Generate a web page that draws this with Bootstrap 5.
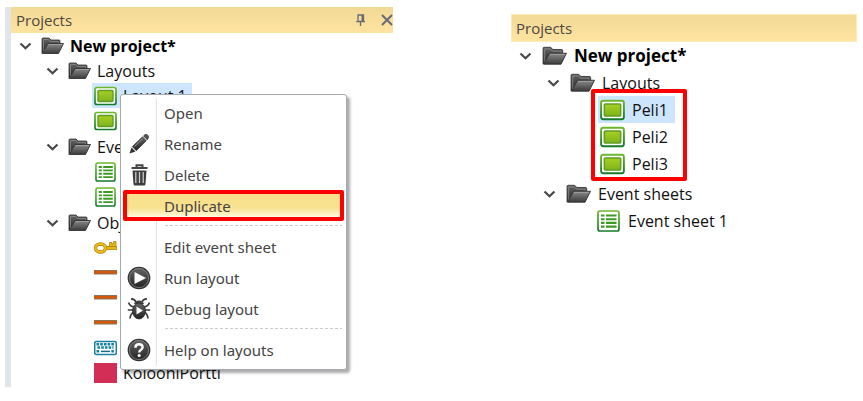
<!DOCTYPE html>
<html lang="en">
<head>
<meta charset="utf-8">
<meta name="viewport" content="width=device-width, initial-scale=1">
<title>Projects</title>
<link href="https://cdn.jsdelivr.net/npm/bootstrap@5.3.0/dist/css/bootstrap.min.css" rel="stylesheet">
<style>
body{font-family:"Open Sans","Noto Sans",sans-serif;font-size:16px;line-height:20px;color:#111;background:#fff}
.workspace{display:grid;grid-template-columns:388fr 346fr;column-gap:118px;padding:7px 6px 14px 5px;align-items:start}
.pane-left{border-left:6px solid #e0e5e9;padding-bottom:2px}
.pane-right{margin-top:7px}
.pane-title{height:26px;padding:0 0 0 5px;background:linear-gradient(#f1d996,#ffe4a0);color:#4b4742;font-size:15px}
.pane-right .pane-title{height:28px;padding-left:4px;border:1px solid #fcebbb}
.pane-title h1,.pane-title h2{font-size:inherit;font-weight:400;margin:0;line-height:20px}
.tool,.twisty{border:0;background:none;padding:0;display:flex;flex:none}
.tree{padding-left:8px}
.tree ul{padding-left:27px}
.line{height:25px;white-space:nowrap}
.twisty{width:13px;margin-right:9px}
.glyph{width:23px;height:20px;flex:none;margin-right:6px}
.tree .leaf{padding-left:48px}
.picked{background:#cde6fe;padding-left:2px;margin-left:-2px;width:100px}
.group-next{margin-top:1px}
.pane-right .tree ul{padding-left:28px}
.pane-right .line{height:27px}
.pane-right .twisty{margin-right:10px}
.pane-right .glyph{width:25px;height:22px;margin-right:7px}
.pane-right .tree .leaf{padding-left:53px}
.pane-right .picked{width:77px}
.pane-right .group-next{margin-top:3px;margin-left:-4px}
.pane-right .root-line{font-size:17px}
.picks{position:relative}
.picks::after{content:"";position:absolute;left:44px;top:-7px;width:96px;height:92px;border:4px solid #f00;border-radius:2px;pointer-events:none}
.ctx{position:absolute;left:109px;top:87px;width:227px;padding:2px 2px 4px;background:#fff;border:1px solid #a5aab0;border-radius:3px;box-shadow:3px 3px 3px #0005;font-family:"Noto Sans","Open Sans",sans-serif;font-size:15px}
.ctx::before{content:"";position:absolute;left:35px;top:3px;bottom:3px;border-left:1px solid #e0e3e6}
.ctx button{height:31px;padding:0 0 0 4px;color:#444;gap:13px;position:relative}
.ctx button svg,.ctx .blank{width:24px;height:24px;flex:none}
.ctx button.chosen{background:linear-gradient(#f9df8a,#f8e18f 60%,#fffadd);border:4px solid #f00;border-radius:2px;padding-left:0}
.ctx hr{margin:4px 2px 5px 42px;height:1px;border:0;opacity:1;background:repeating-linear-gradient(90deg,#ccc 0 3px,#fff 3px 5px)}
</style>
<script src="https://cdn.jsdelivr.net/npm/bootstrap@5.3.0/dist/js/bootstrap.bundle.min.js"></script>
</head>
<body>
<svg width="0" height="0" class="position-absolute" aria-hidden="true">
<defs>
<linearGradient id="gGreen" x2="0" y2="1"><stop stop-color="#6db82a"/><stop offset="1" stop-color="#137a2b"/></linearGradient>
<linearGradient id="gLime" x2="0" y2="1"><stop stop-color="#a9cf22"/><stop offset="1" stop-color="#7fb31c"/></linearGradient>
<linearGradient id="gGray" x2="0" y2="1"><stop stop-color="#8b8b8b"/><stop offset="1" stop-color="#3a3a3a"/></linearGradient>
<linearGradient id="gDark" x2="0" y2="1"><stop stop-color="#666"/><stop offset="1" stop-color="#222"/></linearGradient>
<symbol id="chev" viewBox="0 0 13 8"><path d="M1.5 1.5 6.5 6.300 11.500 1.500" fill="none" stroke="#484848" stroke-width="2.200"/></symbol>
<symbol id="folder" viewBox="0 0 23 20"><path d="M1 17.500V3Q1 2 2 2H8L10 4H18Q19 4 19 5V8H7Z" fill="url(#gDark)" stroke="#333" stroke-width=".8"/><path d="M2.500 16V3.500H7.500L9.500 5.500H17.500V7" fill="none" stroke="#8a8a8a" stroke-width=".8"/><path d="M1.500 17.500 7 7.500H22.500L17.500 17.500Z" fill="url(#gGray)" stroke="#333" stroke-width=".9"/><path d="M7.500 8.500H21" stroke="#aaa" stroke-width=".7"/></symbol>
<symbol id="layout" viewBox="0 0 23 20"><rect x="1" y="1.500" width="21" height="17" rx="2" fill="#fff" stroke="url(#gGreen)" stroke-width="1.700"/><rect x="4" y="4.500" width="15" height="11" rx="1" fill="url(#gLime)" stroke="#5c9f20" stroke-width="1.400"/></symbol>
<symbol id="sheet" viewBox="0 0 23 22"><rect x="1" y="1" width="21" height="20" rx="2" fill="#fff" stroke="url(#gGreen)" stroke-width="1.700"/><path d="M4 5.500H7.500M9 5.500H19.500M4 9.200H7.500M9 9.200H19.500M4 12.900H7.500M9 12.900H19.500M4 16.600H7.500M9 16.600H19.500" stroke="#3b9a22" stroke-width="2.100"/></symbol>
<symbol id="bar" viewBox="0 0 23 20"><path d="M0 7.500H23V11H0Z" fill="#d4580b"/><path d="M0 7.500H23M0 11H23" stroke="#8c735c" stroke-width="1"/></symbol>
</defs>
</svg>
<main class="workspace">
<section class="pane-left position-relative">
<header class="pane-title d-flex align-items-center"><h1 class="flex-grow-1">Projects</h1>
<button class="tool me-3" aria-label="Pin"><svg width="9" height="13" viewBox="0 0 9 13"><path d="M2 1H7.500V7.500H2ZM.2 7.700H9M4.500 8V12M6.200 1V7" fill="none" stroke="#676b76" stroke-width="1.300"/></svg></button>
<button class="tool" aria-label="Close"><svg width="12" height="12" viewBox="0 0 12 12"><path d="M1 1 11 11M11 1 1 11" stroke="#676b76" stroke-width="2"/></svg></button></header>
<ul class="tree list-unstyled m-0">
<li><div class="line root-line d-flex align-items-center fw-bold text-black"><button class="twisty" aria-label="Collapse project"><svg width="13" height="8"><use href="#chev"/></svg></button><svg class="glyph"><use href="#folder"/></svg>New project*</div>
<ul class="list-unstyled">
<li><div class="line d-flex align-items-center"><button class="twisty" aria-label="Collapse layouts"><svg width="13" height="8"><use href="#chev"/></svg></button><svg class="glyph"><use href="#folder"/></svg>Layouts</div>
<ul class="leaf list-unstyled">
<li class="line d-flex align-items-center"><div class="line d-flex align-items-center picked"><svg class="glyph"><use href="#layout"/></svg>Layout 1</div></li>
<li class="line d-flex align-items-center"><svg class="glyph"><use href="#layout"/></svg></li>
</ul></li>
<li class="group-next"><div class="line d-flex align-items-center"><button class="twisty" aria-label="Collapse event sheets"><svg width="13" height="8"><use href="#chev"/></svg></button><svg class="glyph"><use href="#folder"/></svg>Event sheets</div>
<ul class="leaf list-unstyled">
<li class="line d-flex align-items-center"><svg class="glyph"><use href="#sheet"/></svg></li>
<li class="line d-flex align-items-center"><svg class="glyph"><use href="#sheet"/></svg></li>
</ul></li>
<li class="group-next"><div class="line d-flex align-items-center"><button class="twisty" aria-label="Collapse objects"><svg width="13" height="8"><use href="#chev"/></svg></button><svg class="glyph"><use href="#folder"/></svg>Object types</div>
<ul class="leaf list-unstyled">
<li class="line d-flex align-items-center"><svg class="glyph" viewBox="0 0 23 20"><path d="M11 8.500H22V3.500H19.500V6H18V4.500H15.500V8.500" fill="#e9b60e" stroke="#a87b0c" stroke-width=".7"/><path d="M10 8.500H23V11.500H10Z" fill="#e9b60e" stroke="#a87b0c" stroke-width=".7"/><ellipse cx="6.500" cy="10" rx="5" ry="4" fill="#fff" stroke="#a87b0c" stroke-width="3.400"/><ellipse cx="6.500" cy="10" rx="5" ry="4" fill="none" stroke="#efbd12" stroke-width="2.200"/><circle cx="5.500" cy="10" r="1.500" fill="#fff"/></svg></li>
<li class="line d-flex align-items-center"><svg class="glyph"><use href="#bar"/></svg></li>
<li class="line d-flex align-items-center"><svg class="glyph"><use href="#bar"/></svg></li>
<li class="line d-flex align-items-center"><svg class="glyph"><use href="#bar"/></svg></li>
<li class="line d-flex align-items-center"><svg class="glyph" viewBox="0 0 23 20"><rect x=".7" y="3.500" width="21.600" height="13" rx="1.500" fill="#fff" stroke="#177f9f" stroke-width="1.500"/><path d="M2.500 6.200H20.500M3.500 9.500H19.500M2.500 13.200H20.500" stroke="#177f9f" stroke-width="2.600" stroke-dasharray="2.600 1.100"/><path d="M6 13.400H17" stroke="#fff" stroke-width="3.400"/><path d="M7 13.400H16" stroke="#186a96" stroke-width="1.500"/></svg></li>
<li class="line d-flex align-items-center"><svg class="glyph" viewBox="0 0 23 22" preserveAspectRatio="none"><rect width="23" height="22" fill="#d32f56"/></svg>KolooniPortti</li>
</ul></li>
</ul></li>
</ul>
<div class="ctx" role="menu" aria-label="Layout actions">
<button class="dropdown-item d-flex align-items-center" role="menuitem"><span class="blank"></span>Open</button>
<button class="dropdown-item d-flex align-items-center" role="menuitem"><svg viewBox="0 0 24 24"><path d="M2.500 21.500 4.500 15.500 8.500 19.500Z" fill="#333"/><path d="M5.300 14.600 15.500 4.800 19.300 8.800 9.300 18.700Z" fill="url(#gDark)" stroke="#222" stroke-width=".6"/><path d="M16.500 3.900 18 2.600Q19.500 1.800 20.800 3.200 22.200 4.700 21.300 6.300L20.200 7.800Z" fill="#555" stroke="#222" stroke-width=".6"/><path d="M7.500 14.500 15.500 6.800" stroke="#999" stroke-width="1"/></svg>Rename</button>
<button class="dropdown-item d-flex align-items-center" role="menuitem"><svg viewBox="0 0 24 24"><path d="M9.500 4V2.200H15.500V4M4.500 5H20.500" fill="none" stroke="#444" stroke-width="2"/><path d="M5.500 7.500H19.500L18.500 21Q18.400 22.500 17 22.500H8Q6.600 22.500 6.500 21Z" fill="#3d3d3d"/><path d="M8.800 9V20M12.500 9V20M16.200 9V20" stroke="#ccc" stroke-width="1.300"/></svg>Delete</button>
<button class="dropdown-item d-flex align-items-center chosen" role="menuitem"><span class="blank"></span>Duplicate</button>
<hr>
<button class="dropdown-item d-flex align-items-center" role="menuitem"><span class="blank"></span>Edit event sheet</button>
<button class="dropdown-item d-flex align-items-center" role="menuitem"><svg viewBox="0 0 24 24"><circle cx="12" cy="12" r="10.700" fill="url(#gDark)" stroke="#333" stroke-width="1.300"/><circle cx="12" cy="12" r="9.600" fill="none" stroke="#8a8a8a" stroke-width=".8"/><path d="M7.500 6 19 12 7.500 18Z" fill="#fff"/></svg>Run layout</button>
<button class="dropdown-item d-flex align-items-center" role="menuitem"><svg viewBox="0 0 24 24"><path d="M9 5Q8 2 4 1.800M15 5Q16 2 20 1.800M7 10Q3 9.500 1.500 5.500M17 10Q21 9.500 22.500 5.500M7 13H.8M17 13H23.200M7 15Q3.500 16.500 3 21.500M17 15Q20.500 16.500 21 21.500" fill="none" stroke="#3b3b3b" stroke-width="1.700"/><path d="M7 7Q8 3.500 12 3.500T17 7Z" fill="#444"/><ellipse cx="12" cy="14" rx="6.500" ry="8" fill="url(#gDark)" stroke="#222" stroke-width=".7"/><path d="M9.500 9.500 16 13.500 9.500 17.500Z" fill="#fff"/></svg>Debug layout</button>
<hr>
<button class="dropdown-item d-flex align-items-center" role="menuitem"><svg viewBox="0 0 24 24"><circle cx="12" cy="12" r="10.700" fill="url(#gDark)" stroke="#333" stroke-width="1.300"/><circle cx="12" cy="12" r="9.600" fill="none" stroke="#8a8a8a" stroke-width=".8"/><path d="M8.400 9.700Q8.400 6.300 12 6.300T15.600 9.300Q15.600 11 13.500 12.200 12.200 13 12.200 14.600" fill="none" stroke="#fff" stroke-width="2.400"/><circle cx="12.200" cy="17.600" r="1.500" fill="#fff"/></svg>Help on layouts</button>
</div>
</section>
<section class="pane-right">
<header class="pane-title d-flex align-items-center"><h2>Projects</h2></header>
<ul class="tree list-unstyled m-0">
<li><div class="line root-line d-flex align-items-center fw-bold text-black"><button class="twisty" aria-label="Collapse project"><svg width="13" height="8"><use href="#chev"/></svg></button><svg class="glyph"><use href="#folder"/></svg>New project*</div>
<ul class="list-unstyled">
<li><div class="line d-flex align-items-center"><button class="twisty" aria-label="Collapse layouts"><svg width="13" height="8"><use href="#chev"/></svg></button><svg class="glyph"><use href="#folder"/></svg>Layouts</div>
<ul class="leaf picks list-unstyled">
<li class="line d-flex align-items-center"><div class="line d-flex align-items-center picked"><svg class="glyph"><use href="#layout"/></svg>Peli1</div></li>
<li class="line d-flex align-items-center"><svg class="glyph"><use href="#layout"/></svg>Peli2</li>
<li class="line d-flex align-items-center"><svg class="glyph"><use href="#layout"/></svg>Peli3</li>
</ul></li>
<li class="group-next"><div class="line d-flex align-items-center"><button class="twisty" aria-label="Collapse event sheets"><svg width="13" height="8"><use href="#chev"/></svg></button><svg class="glyph"><use href="#folder"/></svg>Event sheets</div>
<ul class="leaf list-unstyled">
<li class="line d-flex align-items-center"><svg class="glyph"><use href="#sheet"/></svg>Event sheet 1</li>
</ul></li>
</ul></li>
</ul>
</section>
</main>
</body>
</html>
